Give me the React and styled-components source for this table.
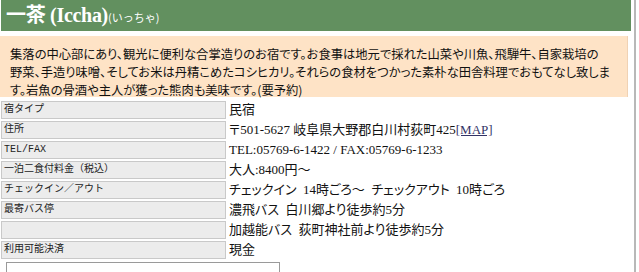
import React from "react";
import styled, { createGlobalStyle } from "styled-components";

const GlobalStyle = createGlobalStyle`
  body {
    margin: 0;
    background: #fff;
    font-family: "Liberation Serif", "Noto Sans CJK JP", serif;
  }
`;

const rows = [
  { label: "宿タイプ", value: "民宿" },
  { label: "住所", value: "〒501-5627 岐阜県大野郡白川村荻町425", map: true },
  { label: "TEL/FAX", value: "TEL:05769-6-1422 / FAX:05769-6-1233" },
  { label: "一泊二食付料金（税込）", value: "大人:8400円〜" },
  { label: "チェックイン／アウト", value: "チェックイン  14時ごろ〜  チェックアウト  10時ごろ" },
  { label: "最寄バス停", value: "濃飛バス  白川郷より徒歩約5分" },
  { label: "", value: "加越能バス  荻町神社前より徒歩約5分" },
  { label: "利用可能決済", value: "現金" },
];

const App = () => {
  return (
    <>
      <GlobalStyle />
      <Page>
        <Title>
          一茶 (Iccha)<small>(いっちゃ)</small>
        </Title>
        <Intro>
          <span>集落の中心部にあり、観光に便利な合掌造りのお宿です。お食事は地元で採れた山菜や川魚、飛騨牛、自家栽培の</span>
          <span>野菜、手造り味噌、そしてお米は丹精こめたコシヒカリ。それらの食材をつかった素朴な田舎料理でおもてなし致しま</span>
          <span>す。岩魚の骨酒や主人が獲った熊肉も美味です。(要予約)</span>
        </Intro>
        <InfoTable>
          <tbody>
            {rows.map((r, i) => (
              <tr key={i}>
                <Label>{r.label}</Label>
                <Value>
                  {r.value}
                  {r.map && <MapLink href="#">[MAP]</MapLink>}
                </Value>
              </tr>
            ))}
          </tbody>
        </InfoTable>
        <BottomBox />
      </Page>
    </>
  );
};

const Page = styled.div`
  width: 636px;
  height: 272px;
  overflow: hidden;
  border-right: 2px solid #b8b8b8;
  box-sizing: border-box;
`;

const Title = styled.h1`
  margin: 0 1px;
  height: 31px;
  width: 630px;
  background-color: #62905f;
  color: #fff;
  font-family: "Liberation Serif", "Noto Sans CJK JP", serif;
  font-size: 20px;
  font-weight: bold;
  line-height: 31px;
  padding-left: 5px;
  box-sizing: border-box;
  letter-spacing: -0.3px;
  small {
    font-family: "Noto Sans CJK JP", sans-serif;
    font-size: 11px;
    font-weight: normal;
    letter-spacing: 0;
  }
`;

const Intro = styled.div`
  margin-top: 5px;
  width: 628px;
  height: 61px;
  box-sizing: border-box;
  background-color: #fee3c6;
  border-right: 1px solid #f0d2b4;
  padding: 9px 0 0 10px;
  font-family: "Noto Sans CJK JP", sans-serif;
  font-feature-settings: "palt";
  font-size: 12.3px;
  line-height: 18px;
  color: #111;
  span {
    display: block;
    white-space: nowrap;
  }
`;

const InfoTable = styled.table`
  border-collapse: separate;
  border-spacing: 2px;
  margin-top: 2px;
  margin-left: -1px;
  width: 632px;
`;

const Label = styled.td`
  width: 219px;
  height: 16px;
  padding: 0 2px;
  background-color: #ececec;
  border: 1px solid #c9c9c9;
  font-family: "Liberation Mono", "Noto Sans CJK JP", monospace;
  font-size: 10px;
  color: #222;
  line-height: 16px;
  white-space: nowrap;
`;

const Value = styled.td`
  padding: 0 0 0 1px;
  font-family: "Liberation Serif", "Noto Sans CJK JP", serif;
  font-feature-settings: "palt";
  font-size: 13px;
  color: #111;
  line-height: 16px;
  white-space: pre;
`;

const MapLink = styled.a`
  color: #333366;
  text-decoration: underline;
`;

const BottomBox = styled.div`
  margin: 1px 0 0 6px;
  width: 272px;
  height: 20px;
  border: 1px solid #9a9a9a;
`;

export default App;
